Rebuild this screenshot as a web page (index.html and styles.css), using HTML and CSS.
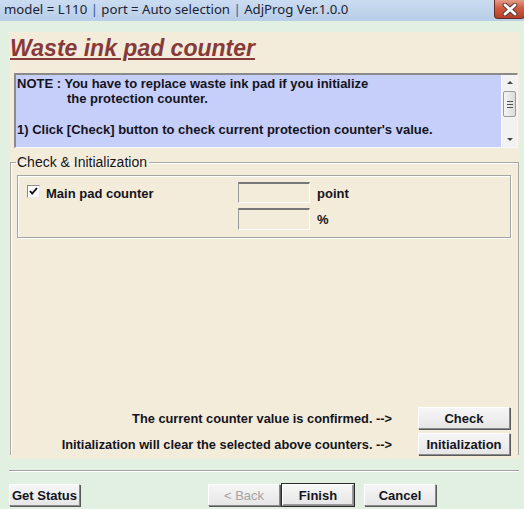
FILE: index.html
```html
<!DOCTYPE html>
<html>
<head>
<meta charset="utf-8">
<link rel="stylesheet" href="styles.css">
</head>
<body>
<div class="window">
  <div class="titlebar">
    <div class="title">model = L110 <span class="sep">|</span> port = Auto selection <span class="sep">|</span> AdjProg Ver.1.0.0</div>
    <div class="close">
      <svg width="20" height="13" viewBox="0 0 20 13">
        <path d="M5 2 L15 11 M15 2 L5 11" stroke="#5a3a3a" stroke-width="4.8" stroke-linecap="round"/>
        <path d="M5 2 L15 11 M15 2 L5 11" stroke="#ffffff" stroke-width="2.8" stroke-linecap="round"/>
      </svg>
    </div>
  </div>
  <div class="body">
    <div class="panel">
      <h1 class="heading">Waste ink pad counter</h1>
      <div class="note">
        <div class="note-text">
          <div>NOTE : You have to replace waste ink pad if you initialize</div>
          <div class="indent">the protection counter.</div>
          <div>&nbsp;</div>
          <div>1) Click [Check] button to check current protection counter's value.</div>
        </div>
        <div class="scrollbar">
          <div class="arrow up"></div>
          <div class="thumb"><span></span><span></span><span></span></div>
          <div class="track"></div>
          <div class="arrow down"></div>
        </div>
      </div>
      <fieldset class="group">
        <legend>Check &amp; Initialization</legend>
        <div class="group-body">
          <div class="counters">
            <div class="chk">
              <svg width="13" height="13" viewBox="0 0 13 13"><path d="M3 6 L5.2 8.6 L10 3" stroke="#111" stroke-width="1.9" fill="none"/></svg>
            </div>
            <div class="label">Main pad counter</div>
            <div class="field"></div>
            <div class="unit">point</div>
            <div></div>
            <div></div>
            <div class="field"></div>
            <div class="unit">%</div>
          </div>
          <div class="actions">
            <div class="action-row">
              <span class="action-text">The current counter value is confirmed. --&gt;</span>
              <button class="btn wide">Check</button>
            </div>
            <div class="action-row">
              <span class="action-text">Initialization will clear the selected above counters. --&gt;</span>
              <button class="btn wide">Initialization</button>
            </div>
          </div>
        </div>
      </fieldset>
    </div>
    <div class="separator"></div>
    <div class="footer">
      <button class="btn status">Get Status</button>
      <div class="nav">
        <button class="btn nav-btn disabled">&lt; Back</button>
        <button class="btn nav-btn default">Finish</button>
        <button class="btn nav-btn cancel">Cancel</button>
      </div>
    </div>
  </div>
</div>
</body>
</html>
```
FILE: styles.css
```css
* { box-sizing: border-box; }
html, body { margin: 0; padding: 0; }
body {
  width: 524px;
  height: 509px;
  overflow: hidden;
  background: #e1f0e1;
  font-family: "Liberation Sans", Arial, sans-serif;
  color: #141420;
}
.window { width: 524px; height: 509px; display: flex; flex-direction: column; }
.titlebar {
  height: 21px;
  display: flex;
  justify-content: space-between;
  align-items: flex-start;
  background: linear-gradient(#cadcf1, #b8cde8);
}
.title {
  font-family: "Noto Sans", "Open Sans", sans-serif;
  font-size: 13.2px;
  line-height: 19px;
  padding-left: 4px;
  color: #1c2233;
}
.sep { color: #2a5a9a; }
.close {
  width: 31px;
  height: 19px;
  margin-right: -1px;
  background: linear-gradient(#e49c86, #cf5c40 45%, #b63f29);
  border: 1px solid #6a2a22;
  border-top: none;
  border-radius: 0 0 4px 4px;
  display: flex;
  align-items: center;
  justify-content: center;
}
.body { padding: 11px 4px 0 9px; display: flex; flex-direction: column; }
.panel {
  width: 511px;
  height: 427px;
  background: #f3ecda;
  display: flex;
  flex-direction: column;
}
.heading {
  margin: 0;
  height: 41px;
  padding: 3px 0 0 1px;
  font-size: 23px;
  line-height: 26px;
  font-weight: bold;
  font-style: italic;
  color: #873a3a;
  text-decoration: underline;
  text-decoration-thickness: 2px;
  text-underline-offset: 2px;
}
.note {
  margin-left: 5px;
  width: 504px;
  height: 75px;
  display: flex;
  background: #c6cefa;
  border-top: 2px solid #8a8a8a;
  border-left: 2px solid #8a8a8a;
  border-right: 1px solid #f8f8f8;
  border-bottom: 1px solid #f8f8f8;
}
.note-text {
  flex: 1;
  padding: 1px 0 0 1px;
  font-size: 13px;
  line-height: 15.3px;
  font-weight: bold;
}
.indent { padding-left: 50px; }
.scrollbar {
  width: 16px;
  display: flex;
  flex-direction: column;
  background: #f2f2f2;
  border-left: 1px solid #fafafa;
}
.arrow { height: 16px; position: relative; }
.arrow::after {
  content: "";
  position: absolute;
  left: 5px;
  width: 0; height: 0;
  border-left: 3px solid transparent;
  border-right: 3px solid transparent;
}
.arrow.up::after { top: 6px; border-bottom: 3px solid #444; }
.arrow.down::after { top: 7px; border-top: 3px solid #444; }
.thumb {
  height: 26px;
  margin: 0 1px;
  border: 1px solid #9a9a9a;
  border-radius: 2px;
  background: linear-gradient(90deg, #f4f4f4, #dcdcdc);
  display: flex;
  flex-direction: column;
  align-items: center;
  justify-content: center;
  gap: 2px;
}
.thumb span { width: 6px; height: 1px; background: #555; }
.track { flex: 1; }
.group {
  margin: 6px 0 0 1px;
  width: 509px;
  padding: 5px 7px 0 6px;
  border: 1px solid #a9a9a2;
  border-bottom: none;
  box-shadow: inset 1px 1px #ffffff;
}
.group legend {
  padding: 0 2px 0 1px;
  margin-left: -1px;
  font-size: 14px;
  line-height: 16px;
  color: #141420;
}
.group-body {
  height: 280px;
  display: flex;
  flex-direction: column;
}
.counters {
  height: 63px;
  border: 1px solid #a5a5a5;
  box-shadow: inset 1px 1px #fff, 1px 1px #fff;
  padding: 6px 0 0 9px;
  display: grid;
  grid-template-columns: 19px 192px 79px auto;
  grid-template-rows: 21px 22px;
  row-gap: 5px;
  align-items: start;
}
.chk {
  margin-top: 3px;
  width: 13px;
  height: 13px;
  background: #fff;
  border: 1px solid #8a8a8a;
  border-right-color: #e8e8e8;
  border-bottom-color: #e8e8e8;
  display: flex;
}
.chk svg { margin: -1px; }
.label {
  font-size: 13px;
  font-weight: bold;
  line-height: 15px;
  padding-top: 4px;
}
.field {
  width: 72px;
  height: 100%;
  border-top: 2px solid #777;
  border-left: 1px solid #999;
  border-right: 1px solid #fff;
  border-bottom: 1px solid #fff;
  background: #f3ecda;
}
.unit {
  font-size: 13px;
  font-weight: bold;
  line-height: 15px;
  padding-top: 4px;
}
.actions {
  margin-top: auto;
  display: flex;
  flex-direction: column;
  gap: 4px;
}
.action-row {
  display: flex;
  justify-content: flex-end;
  align-items: center;
  gap: 26px;
}
.action-text { font-size: 12.8px; font-weight: bold; line-height: 15px; }
.btn {
  font-family: "Liberation Sans", Arial, sans-serif;
  font-size: 13px;
  font-weight: bold;
  color: #141420;
  background: linear-gradient(#f6f6f6, #e6e6e6);
  border: 1px solid;
  border-color: #ffffff #8a8a8a #8a8a8a #ffffff;
  box-shadow: 1px 1px #5a5a5a;
  padding: 0;
  height: 22px;
}
.wide { width: 92px; margin-right: 1px; }
.separator {
  margin-top: 11px;
  width: 510px;
  height: 2px;
  border-top: 1px solid #a0a0a0;
  border-bottom: 1px solid #ffffff;
}
.footer {
  margin-top: 12px;
  display: flex;
  align-items: flex-start;
}
.status { width: 71px; height: 22px; }
.nav { margin-left: 128px; display: flex; }
.nav-btn { width: 72px; height: 22px; }
.disabled { color: #a4a4a4; font-weight: normal; margin-right: 1px; }
.default {
  outline: 1px solid #2a2a2a;
  box-shadow: 1px 1px #5a5a5a, inset -1px -1px #9a9a9a;
  margin-left: 1px;
}
.cancel { margin-left: 10px; }
```
